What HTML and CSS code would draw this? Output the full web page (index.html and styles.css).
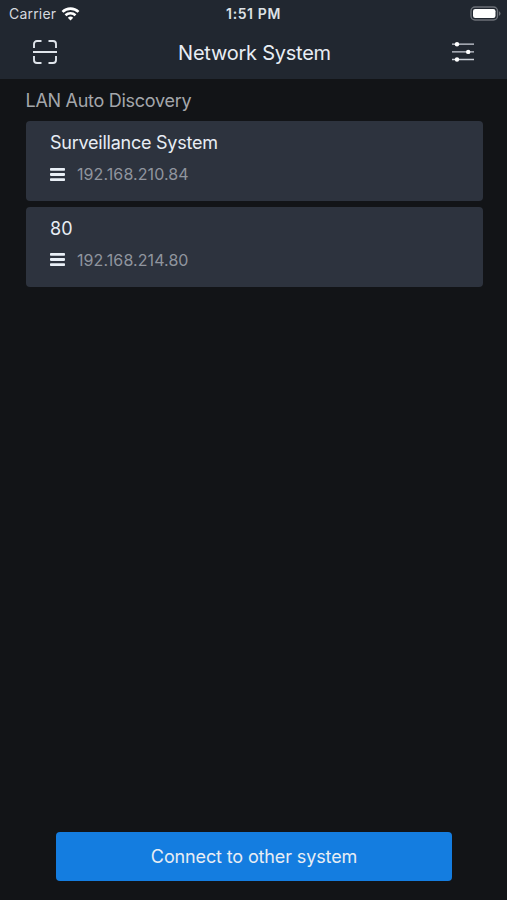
FILE: index.html
```html
<!DOCTYPE html>
<html lang="en">
<head>
<meta charset="utf-8">
<meta name="viewport" content="width=device-width, initial-scale=1">
<title>Network System</title>
<link rel="stylesheet" href="styles.css">
</head>
<body>
<div class="app">
  <header class="header">
    <div class="status">
      <div class="carrier">
        <span class="carrier-name">Carrier</span>
        <svg class="wifi" width="19" height="14" viewBox="0 0 18 14" fill="none" stroke="#fff" stroke-width="2.6">
          <path d="M1 4.9a11.4 11.4 0 0 1 16 0"/>
          <path d="M4 8.2a7.2 7.2 0 0 1 10 0"/>
          <path d="M9 13.6L6.3 10.8a3.9 3.9 0 0 1 5.4 0z" fill="#fff" stroke="none"/>
        </svg>
      </div>
      <span class="time">1:51 PM</span>
      <svg class="battery" width="32" height="15" viewBox="0 0 32 15">
        <rect x="2" y="1" width="26.5" height="13" rx="4" fill="none" stroke="#6c7077" stroke-width="1.4"/>
        <rect x="4" y="3" width="22.5" height="9" rx="2.2" fill="#fff"/>
        <path d="M30 5.2a2.5 2.5 0 0 1 0 4.6z" fill="#6c7077"/>
      </svg>
    </div>
    <nav class="nav">
      <button class="icon-button" aria-label="Scan">
        <svg width="24" height="24" viewBox="0 0 24 24" fill="none" stroke="#e0e5eb" stroke-width="1.9">
          <path d="M1 8V4a3 3 0 0 1 3-3h4.5M15.5 1H20a3 3 0 0 1 3 3v4M1 16v4a3 3 0 0 0 3 3h4.5M15.5 23H20a3 3 0 0 0 3-3v-4M0 12h24"/>
        </svg>
      </button>
      <h1 class="title">Network System</h1>
      <button class="icon-button" aria-label="Settings">
        <svg width="22" height="20" viewBox="0 0 22 20">
          <path d="M0 2.2h22M0 9.9h22M0 17.5h22" stroke="#cbd0d7" stroke-width="1.3"/>
          <g fill="#fff"><circle cx="5" cy="2.2" r="2.2"/><circle cx="16.2" cy="9.9" r="2.2"/><circle cx="5" cy="17.5" r="2.2"/></g>
        </svg>
      </button>
    </nav>
  </header>
  <main class="content">
    <h2 class="section-title">LAN Auto Discovery</h2>
    <ul class="systems">
      <li class="card">
        <span class="name">Surveillance System</span>
        <span class="address">
          <svg width="15" height="13" viewBox="0 0 15 13" fill="#e9eff6"><rect width="15" height="2.8" rx=".8"/><rect y="5.1" width="15" height="2.8" rx=".8"/><rect y="10.2" width="15" height="2.8" rx=".8"/></svg>
          <span class="ip">192.168.210.84</span>
        </span>
      </li>
      <li class="card">
        <span class="name name-short">80</span>
        <span class="address">
          <svg width="15" height="13" viewBox="0 0 15 13" fill="#e9eff6"><rect width="15" height="2.8" rx=".8"/><rect y="5.1" width="15" height="2.8" rx=".8"/><rect y="10.2" width="15" height="2.8" rx=".8"/></svg>
          <span class="ip">192.168.214.80</span>
        </span>
      </li>
    </ul>
  </main>
  <footer class="footer">
    <button class="connect"><span>Connect to other system</span></button>
  </footer>
</div>
</body>
</html>
```

FILE: styles.css
```css
* { box-sizing: border-box; }
body {
  margin: 0;
  background: #121417;
  font-family: Inter, "Liberation Sans", sans-serif;
  color: #e8edf4;
}
button {
  border: 0;
  padding: 0;
  background: none;
  font: inherit;
  color: inherit;
}
.app {
  display: flex;
  flex-direction: column;
  height: 900px;
}
.header {
  height: 79px;
  background: #212730;
}
.status {
  display: grid;
  grid-template-columns: 1fr auto 1fr;
  align-items: center;
  height: 27px;
  padding: 0 6px 0 9px;
}
.carrier {
  display: flex;
  align-items: center;
  gap: 5px;
}
.carrier-name {
  font-size: 14px;
  line-height: 20px;
  letter-spacing: 0.2px;
  color: #d5d9df;
}
.time {
  margin-right: 3px;
  font-size: 14px;
  line-height: 20px;
  font-weight: 600;
  letter-spacing: 0.6px;
  color: #dde1e6;
}
.battery { justify-self: end; }
.nav {
  display: flex;
  align-items: center;
  justify-content: space-between;
  height: 50px;
  padding: 0 33px;
}
.icon-button {
  display: flex;
}
.title {
  margin: 0;
  padding-top: 1px;
  font-size: 20px;
  font-weight: 400;
  line-height: 28px;
  letter-spacing: -0.24px;
}
.content {
  flex: 1;
  padding: 9px 24.5px 0 25.5px;
}
.section-title {
  margin: 0;
  font-size: 18px;
  font-weight: 400;
  line-height: 26px;
  letter-spacing: -0.28px;
  color: #a4a7ab;
}
.systems {
  display: flex;
  flex-direction: column;
  gap: 5.5px;
  margin: 7px 0 0;
  padding: 0;
  list-style: none;
}
.card {
  display: flex;
  flex-direction: column;
  gap: 8px;
  height: 80px;
  padding: 10px 24.5px;
  border-radius: 4px;
  background: #2d333e;
}
.name {
  font-size: 18px;
  line-height: 24px;
  letter-spacing: -0.24px;
}
.name-short { letter-spacing: 0; }
.address {
  display: flex;
  align-items: center;
  gap: 12px;
}
.ip {
  font-size: 16px;
  line-height: 22px;
  letter-spacing: 0.09px;
  color: #90959e;
}
.footer {
  padding: 0 55px 19.5px 56px;
}
.connect {
  width: 100%;
  height: 48.5px;
  border-radius: 4px;
  background: #147de0;
  font-size: 18px;
  letter-spacing: -0.13px;
}
```
